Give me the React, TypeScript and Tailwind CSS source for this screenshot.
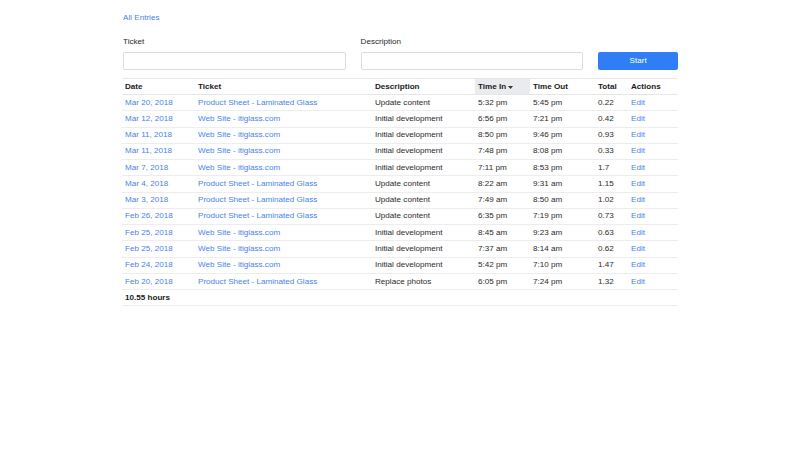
import React from "react";

interface Entry {
  date: string;
  ticket: string;
  description: string;
  timeIn: string;
  timeOut: string;
  total: string;
}

const entries: Entry[] = [
  { date: "Mar 20, 2018", ticket: "Product Sheet - Laminated Glass", description: "Update content", timeIn: "5:32 pm", timeOut: "5:45 pm", total: "0.22" },
  { date: "Mar 12, 2018", ticket: "Web Site - itiglass.com", description: "Initial development", timeIn: "6:56 pm", timeOut: "7:21 pm", total: "0.42" },
  { date: "Mar 11, 2018", ticket: "Web Site - itiglass.com", description: "Initial development", timeIn: "8:50 pm", timeOut: "9:46 pm", total: "0.93" },
  { date: "Mar 11, 2018", ticket: "Web Site - itiglass.com", description: "Initial development", timeIn: "7:48 pm", timeOut: "8:08 pm", total: "0.33" },
  { date: "Mar 7, 2018", ticket: "Web Site - itiglass.com", description: "Initial development", timeIn: "7:11 pm", timeOut: "8:53 pm", total: "1.7" },
  { date: "Mar 4, 2018", ticket: "Product Sheet - Laminated Glass", description: "Update content", timeIn: "8:22 am", timeOut: "9:31 am", total: "1.15" },
  { date: "Mar 3, 2018", ticket: "Product Sheet - Laminated Glass", description: "Update content", timeIn: "7:49 am", timeOut: "8:50 am", total: "1.02" },
  { date: "Feb 26, 2018", ticket: "Product Sheet - Laminated Glass", description: "Update content", timeIn: "6:35 pm", timeOut: "7:19 pm", total: "0.73" },
  { date: "Feb 25, 2018", ticket: "Web Site - itiglass.com", description: "Initial development", timeIn: "8:45 am", timeOut: "9:23 am", total: "0.63" },
  { date: "Feb 25, 2018", ticket: "Web Site - itiglass.com", description: "Initial development", timeIn: "7:37 am", timeOut: "8:14 am", total: "0.62" },
  { date: "Feb 24, 2018", ticket: "Web Site - itiglass.com", description: "Initial development", timeIn: "5:42 pm", timeOut: "7:10 pm", total: "1.47" },
  { date: "Feb 20, 2018", ticket: "Product Sheet - Laminated Glass", description: "Replace photos", timeIn: "6:05 pm", timeOut: "7:24 pm", total: "1.32" },
];

export default function App() {
  return (
    <div
      className="min-h-screen w-full bg-white text-[8.1px] leading-[10px] text-[#2a2a2a]"
      style={{ fontFamily: "'Liberation Sans', Arial, sans-serif" }}
    >
      <div className="mx-auto w-[556px] pt-[13px]">
        <a href="#" className="block pl-px text-[#4a7fe8]">
          All Entries
        </a>

        {/* entry form */}
        <div className="mt-[14px] flex items-end">
          <div className="ml-px flex w-[223px] flex-col">
            <label className="mb-[5px]">Ticket</label>
            <input className="h-[18px] rounded-[2px] border border-[#dcdcdc] bg-white outline-none" />
          </div>
          <div className="ml-[15px] flex w-[223px] flex-col">
            <label className="mb-[5px]">Description</label>
            <input className="h-[18px] rounded-[2px] border border-[#dcdcdc] bg-white outline-none" />
          </div>
          <button className="ml-[15px] h-[18px] w-[80px] rounded-[2px] bg-[#2f7ef6] font-medium text-white">
            Start
          </button>
        </div>

        {/* entries table */}
        <table className="mt-[8px] w-full table-fixed border-collapse">
          <colgroup>
            <col className="w-[73px]" />
            <col className="w-[177px]" />
            <col className="w-[103px]" />
            <col className="w-[55px]" />
            <col className="w-[65px]" />
            <col className="w-[33px]" />
            <col className="w-[50px]" />
          </colgroup>
          <thead>
            <tr className="h-[16px] border-y border-[#e6e6e6] text-left font-bold text-[#1a1a1a]">
              <th className="px-[3px]">Date</th>
              <th className="px-[3px]">Ticket</th>
              <th className="px-[3px]">Description</th>
              <th className="bg-[#e9ebee] px-[3px]">
                <span className="inline-flex items-center gap-[2px]">
                  Time In
                  <svg width="5" height="3" viewBox="0 0 5 3" className="mt-[2px]">
                    <path d="M0 0h5L2.5 3z" fill="#333" />
                  </svg>
                </span>
              </th>
              <th className="px-[3px]">Time Out</th>
              <th className="px-[3px]">Total</th>
              <th className="px-[3px]">Actions</th>
            </tr>
          </thead>
          <tbody>
            {entries.map((e, i) => (
              <tr key={i} className="h-[16.27px] border-b border-[#ededed]">
                <td className="px-[3px] text-[#4a7fe8]">{e.date}</td>
                <td className="px-[3px] text-[#4a7fe8]">{e.ticket}</td>
                <td className="px-[3px]">{e.description}</td>
                <td className="px-[3px]">{e.timeIn}</td>
                <td className="px-[3px]">{e.timeOut}</td>
                <td className="px-[3px]">{e.total}</td>
                <td className="px-[3px] text-[#4a7fe8]">Edit</td>
              </tr>
            ))}
            <tr className="h-[16.27px] border-b border-[#ededed]">
              <td colSpan={7} className="px-[3px] font-bold text-[#1a1a1a]">
                10.55 hours
              </td>
            </tr>
          </tbody>
        </table>
      </div>
    </div>
  );
}
